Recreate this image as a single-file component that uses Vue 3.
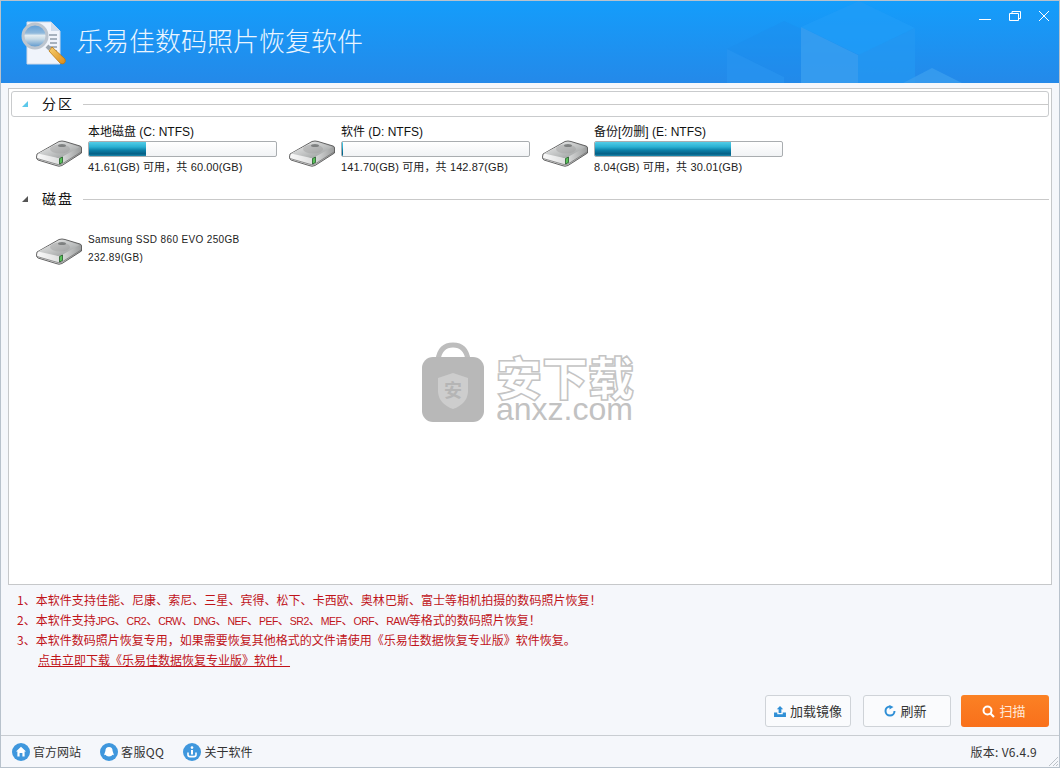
<template>
  <div class="window">
    <header class="titlebar">
      <svg class="cubes" width="360" height="82" viewBox="0 0 360 82">
        <path d="M28 48 L85 20 L120 36 L102 46 L102 82 L28 82 Z" fill="#1f8bea" opacity=".3" />
        <path d="M28 48 L85 76 L85 82 L28 82 Z" fill="#2b97f2" opacity=".5" />
        <path d="M102 26 L160 0 L216 27 L160 54 Z" fill="#1f9cf7" opacity=".8" />
        <path d="M102 26 L159 54 L159 82 L102 82 Z" fill="#379ef0" opacity=".85" />
        <path d="M159 54 L216 27 L216 82 L159 82 Z" fill="#2398f2" opacity=".7" />
        <path d="M204 82 L233 67 L263 82 Z" fill="#3a9eef" opacity=".8" />
      </svg>
      <div class="brand">
        <svg class="logo" width="46" height="46" viewBox="0 0 46 46">
          <defs>
            <linearGradient id="lens" x1="0" y1="0" x2="0" y2="1">
              <stop offset="0" stop-color="#5b9bd6" />
              <stop offset=".38" stop-color="#8fb9dc" />
              <stop offset=".48" stop-color="#e4edf1" />
              <stop offset=".62" stop-color="#c8dbe6" />
              <stop offset="1" stop-color="#4f8fcb" />
            </linearGradient>
            <linearGradient id="handle" x1="0" y1="0" x2="1" y2="1">
              <stop offset="0" stop-color="#f8d070" />
              <stop offset="1" stop-color="#d98a18" />
            </linearGradient>
          </defs>
          <path d="M6 2 H30 L39 11 V44 H6 Z" fill="#f0f4fb" stroke="#cfd8e6" />
          <path d="M30 2 V11 H39" fill="#cfdcec" />
          <path d="M28 15 H36 M29 19 H36 M29 23 H36 M28 27 H36 M30 31 H36" stroke="#8f9cab" stroke-width="1.4" />
          <circle cx="14" cy="16" r="12" fill="url(#lens)" stroke="#bcc5cf" stroke-width="3" />
          <path d="M26 26 L29 29" stroke="#9aa4ae" stroke-width="4" />
          <path d="M28 31 L31 27 L44 39 Q45 42 43 43.500 Q41 44.500 39 43 Z" fill="url(#handle)" stroke="#b97712" stroke-width=".8" />
        </svg>
        <h1 class="app-title">乐易佳数码照片恢复软件</h1>
      </div>
      <div class="win-btns">
        <svg width="12" height="10" viewBox="0 0 12 10"><path d="M0 8.500 H12" stroke="#fff" /></svg>
        <svg width="12" height="10" viewBox="0 0 12 10"><path d="M.5 2.500 H9.500 V9.500 H.5 Z M3 2.500 V.5 H11.500 V7.500 H9.500" fill="none" stroke="#fff" /></svg>
        <svg width="10" height="10" viewBox="0 0 10 10"><path d="M0 0 L10 10 M10 0 L0 10" stroke="#fff" /></svg>
      </div>
    </header>

    <main class="panel">
      <div class="section-head selected">
        <span class="arrow cyan"></span>
        <span class="section-name">分区</span>
        <span class="rule"></span>
      </div>
      <div class="drives">
        <div v-for="d in partitions" :key="d.name" class="drive">
          <svg class="hdd" width="47" height="30" viewBox="0 0 47 30">
            <use href="#hdd-shape" />
          </svg>
          <div class="drive-info">
            <div class="drive-name">{{ d.name }}</div>
            <div class="bar"><div class="bar-fill" :style="{ width: d.used + '%' }"></div></div>
            <div class="drive-cap">{{ d.cap }}</div>
          </div>
        </div>
      </div>

      <div class="section-head second">
        <span class="arrow"></span>
        <span class="section-name">磁盘</span>
        <span class="rule"></span>
      </div>
      <div class="drive disk">
        <svg class="hdd" width="47" height="30" viewBox="0 0 47 30">
          <defs>
            <linearGradient id="hdd-top" x1="0" y1="0" x2="1" y2="1">
              <stop offset="0" stop-color="#f0f0f0" />
              <stop offset=".55" stop-color="#bfc1c1" />
              <stop offset="1" stop-color="#8f9292" />
            </linearGradient>
            <linearGradient id="hdd-side" x1="0" y1="0" x2="1" y2="0">
              <stop offset="0" stop-color="#fafafa" />
              <stop offset=".55" stop-color="#dcdddd" />
              <stop offset="1" stop-color="#9a9c9c" />
            </linearGradient>
            <g id="hdd-shape">
              <path d="M2 16 L24 3.500 Q27 2.500 30 3.500 L45 8 Q46.500 8.500 46.500 10 V15 L27 27.500 Q24 29 21 27.500 L3 22 Q1.500 21.500 1.500 19 Z" fill="url(#hdd-side)" stroke="#555" stroke-width=".9" />
              <path d="M3 15.500 L24.500 4.500 Q27 3.500 30 4.500 L44.500 9 L26 19.500 Q23.500 20.500 21 19.500 Z" fill="url(#hdd-top)" />
              <ellipse cx="25" cy="11" rx="10" ry="4.500" fill="#9a9c9c" opacity=".4" />
              <ellipse cx="27" cy="7.500" rx="4" ry="1.600" fill="#6b6d6d" opacity=".75" />
              <path d="M2 20.500 L21 26 Q24 27.500 27 26 L46 14" fill="none" stroke="#777" stroke-width=".8" />
              <path d="M24.500 20.500 L27.500 19 V24.500 L24.500 26 Z" fill="#58c25a" stroke="#14491a" stroke-width=".7" />
            </g>
          </defs>
          <use href="#hdd-shape" />
        </svg>
        <div class="drive-info">
          <div class="disk-line">Samsung SSD 860 EVO 250GB</div>
          <div class="disk-line">232.89(GB)</div>
        </div>
      </div>

      <div class="watermark">
        <svg width="62" height="80" viewBox="0 0 62 80">
          <path d="M16 18 Q18 3 31 3 Q44 3 46 18" fill="none" stroke="#bdbdbd" stroke-width="5" />
          <rect x="0" y="15" width="62" height="65" rx="11" fill="#b8b8b8" />
          <path d="M31 31 L46 36 V50 Q45 62 31 67 Q17 62 16 50 V36 Z" fill="#cdcdcd" />
          <text x="31" y="55" text-anchor="middle" class="shield-text">安</text>
        </svg>
        <div class="wm-text">
          <div class="wm-cn">安下载</div>
          <div class="wm-en">anxz.com</div>
        </div>
      </div>
    </main>

    <section class="notes">
      <p class="l1">1、本软件支持佳能、尼康、索尼、三星、宾得、松下、卡西欧、奥林巴斯、富士等相机拍摄的数码照片恢复！</p>
      <p>2、本软件支持<span class="latin">JPG</span>、<span class="latin">CR2</span>、<span class="latin">CRW</span>、<span class="latin">DNG</span>、<span class="latin">NEF</span>、<span class="latin">PEF</span>、<span class="latin">SR2</span>、<span class="latin">MEF</span>、<span class="latin">ORF</span>、<span class="latin">RAW</span>等格式的数码照片恢复！</p>
      <p>3、本软件数码照片恢复专用，如果需要恢复其他格式的文件请使用《乐易佳数据恢复专业版》软件恢复。</p>
      <p class="dl"><a>点击立即下载《乐易佳数据恢复专业版》软件！</a></p>
    </section>

    <div class="actions">
      <button class="btn load">
        <svg width="12" height="11" viewBox="0 0 13 12"><path d="M6.500 0 L10 3.600 H8 V7.500 H5 V3.600 H3 Z M0 7 H3.500 V9 H9.500 V7 H13 V12 H0 Z" fill="#2f8fd6" /></svg>
        <span>加载镜像</span>
      </button>
      <button class="btn refresh">
        <svg width="12" height="12" viewBox="0 0 12 12"><path d="M6 1.500 A4.500 4.500 0 1 0 10.500 6" fill="none" stroke="#2f8fd6" stroke-width="2" /><path d="M5.500 0 L9.500 2 L5.500 4.500 Z" fill="#2f8fd6" /></svg>
        <span>刷新</span>
      </button>
      <button class="btn scan">
        <svg width="13" height="13" viewBox="0 0 13 13"><circle cx="5.500" cy="5.500" r="4" fill="none" stroke="#fff" stroke-width="2" /><path d="M8.500 8.500 L12 12" stroke="#fff" stroke-width="2.200" /></svg>
        <span>扫描</span>
      </button>
    </div>

    <footer class="status">
      <div class="links">
        <a class="link">
          <svg width="18" height="18" viewBox="0 0 18 18"><circle cx="9" cy="9" r="9" fill="#3f97dd" /><path d="M9 3.800 L14 8.400 H12.600 V13.500 H10.400 V10 H7.600 V13.500 H5.400 V8.400 H4 Z" fill="#fff" /></svg>
          官方网站
        </a>
        <a class="link qq">
          <svg width="18" height="18" viewBox="0 0 18 18"><circle cx="9" cy="9" r="9" fill="#3f97dd" /><path d="M9 4 Q12.600 4 12.600 8 L13.800 11.600 Q13.400 12.600 12.400 11.800 Q12 13.500 9 13.500 Q6 13.500 5.600 11.800 Q4.600 12.600 4.200 11.600 L5.400 8 Q5.400 4 9 4 Z" fill="#fff" /></svg>
          客服QQ
        </a>
        <a class="link">
          <svg width="18" height="18" viewBox="0 0 18 18"><circle cx="9" cy="9" r="9" fill="#3f97dd" /><circle cx="9" cy="4.600" r="1.300" fill="#fff" /><path d="M8 7 H10 V11.600 H8 Z" fill="#fff" /><path d="M5 9.500 V12 Q5 13.600 7 13.600 H11 Q13 13.600 13 12 V9.500" fill="none" stroke="#fff" stroke-width="1.600" /></svg>
          关于软件
        </a>
      </div>
      <span class="version">版本: V6.4.9</span>
      <svg class="grip" width="12" height="12" viewBox="0 0 12 12"><path d="M11 2 L2 11 M11 6 L6 11 M11 9 L9 11" stroke="#bcc2c8" /></svg>
    </footer>
  </div>
</template>

<script setup>
const partitions = [
  { name: '本地磁盘 (C: NTFS)', used: 30.6, cap: '41.61(GB) 可用，共 60.00(GB)' },
  { name: '软件 (D: NTFS)', used: 0.8, cap: '141.70(GB) 可用，共 142.87(GB)' },
  { name: '备份[勿删] (E: NTFS)', used: 72.7, cap: '8.04(GB) 可用，共 30.01(GB)' }
]
</script>

<style>
html, body { margin: 0; background: #f5f7fb; }
</style>

<style scoped>
.window { position: relative; width: 1060px; height: 768px; box-sizing: border-box; border: 1px solid #b8c2cc; background: #f5f7fb; display: flex; flex-direction: column; font-family: "Liberation Sans", "Noto Sans CJK SC", sans-serif; color: #222; overflow: hidden; }

.titlebar { position: relative; height: 82px; flex-shrink: 0; background: linear-gradient(180deg, #149dfb, #2489e9); display: flex; align-items: center; justify-content: space-between; }
.cubes { position: absolute; right: 0; top: 0; }
.brand { position: relative; display: flex; align-items: center; gap: 10px; padding-left: 20px; }
.logo { margin-top: 2px; }
.app-title { margin: 0 0 4px; font-family: "Noto Sans CJK SC", sans-serif; font-size: 26px; font-weight: 300; color: #eaf5ff; line-height: 1; }
.win-btns { position: relative; align-self: flex-start; display: flex; gap: 18px; padding: 10px 10px 0 0; }

.panel { position: relative; height: 497px; flex-shrink: 0; box-sizing: border-box; margin: 5px 7px 0; background: #fff; border: 1px solid #c6c8ca; padding: 2px; }
.section-head { display: flex; align-items: center; height: 26px; box-sizing: border-box; padding-left: 10px; }
.section-head.selected { border: 1px solid #c9cbcd; border-radius: 3px; }
.section-head.second { margin-top: 12px; padding-left: 11px; }
.arrow { width: 0; height: 0; border-style: solid; border-width: 0 0 6px 6px; border-color: transparent transparent #555 transparent; margin-right: 14px; }
.arrow.cyan { border-bottom-color: #5cc8ea; }
.section-name { font-family: "Noto Sans CJK SC", sans-serif; font-size: 14px; line-height: 14px; margin-top: -3px; letter-spacing: 2px; color: #111; }
.rule { flex: 1; height: 1px; background: #c9c9c9; margin-left: 9px; }

.drives { display: flex; padding: 8px 0 0 24px; }
.drive { display: flex; width: 253px; flex-shrink: 0; gap: 6px; }
.hdd { margin-top: 13px; flex-shrink: 0; }
.drive-info { display: flex; flex-direction: column; }
.drive-name { font-size: 12px; line-height: 15px; color: #111; }
.bar { width: 189px; height: 16px; box-sizing: border-box; margin-top: 1px; border: 1px solid #a9adb0; border-radius: 2px; background: linear-gradient(180deg, #fff, #f1f3f5); overflow: hidden; }
.bar-fill { height: 100%; background: linear-gradient(180deg, #52cde8 0%, #2bb0d2 35%, #0b7ea6 60%, #045f85 85%, #1c8bb0 100%); }
.drive-cap { font-size: 11px; line-height: 14px; margin-top: 3px; letter-spacing: .12px; color: #222; }
.disk { padding: 21px 0 0 24px; width: auto; }
.disk .hdd { margin-top: 3px; }
.disk-line { font-size: 10px; line-height: 14px; letter-spacing: .35px; margin-bottom: 4px; color: #222; }

.watermark { position: absolute; left: 413px; top: 253px; display: flex; gap: 12px; }
.shield-text { font-family: "Noto Sans CJK SC", sans-serif; font-size: 18px; fill: #b5b5b5; font-weight: 700; }
.wm-cn { font-family: "Noto Sans CJK SC", sans-serif; font-weight: 900; font-size: 46px; line-height: 44px; margin-top: 11px; color: #fff; -webkit-text-stroke: 1.5px #c4c4c4; }
.wm-en { font-size: 32px; line-height: 25px; color: #c2c2c2; }

.notes { padding: 5px 0 0 16px; height: 108px; box-sizing: border-box; flex-shrink: 0; font-family: "Noto Sans CJK SC", sans-serif; color: #c0141a; font-size: 12px; }
.notes p { margin: 0; height: 20px; line-height: 20px; }
.notes .l1 { letter-spacing: .04px; }
.notes .latin { font-family: "Liberation Sans", sans-serif; font-size: 10.5px; letter-spacing: -.5px; }
.notes .dl { padding-left: 21px; }
.notes a { text-decoration: underline; }

.actions { display: flex; justify-content: flex-end; gap: 12px; padding-right: 10px; margin-top: 2px; }
.btn { height: 32px; width: 88px; box-sizing: border-box; display: flex; align-items: center; justify-content: center; gap: 4px; padding: 0 0 2px; border: 1px solid #cfd3d8; border-radius: 3px; background: #fafbfd; font-family: "Noto Sans CJK SC", sans-serif; font-size: 13px; color: #333; }
.btn svg { margin-top: 2px; }
.btn.load { width: 86px; }
.btn.refresh { padding-right: 3px; }
.btn.scan { border: 0; background: linear-gradient(180deg, #fb8124, #f9701b); color: #ffe9d8; margin-left: -2px; padding-right: 2px; }

.status { position: absolute; left: 0; right: 0; bottom: 0; height: 32px; box-sizing: border-box; border-top: 1px solid #c9cdd2; display: flex; align-items: center; justify-content: space-between; padding: 0 22px 1px 11px; font-family: "Noto Sans CJK SC", sans-serif; font-size: 12px; color: #333; }
.links { display: flex; gap: 19px; }
.link { display: flex; align-items: center; gap: 3px; }
.link svg { margin-top: 1px; }
.link.qq { letter-spacing: .4px; }
.version { letter-spacing: .3px; }
.grip { position: absolute; right: 0; bottom: 0; }
</style>
